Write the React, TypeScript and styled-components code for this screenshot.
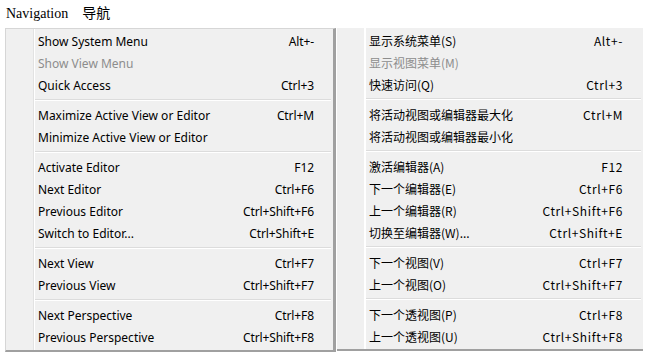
import React from "react";
import styled, { createGlobalStyle } from "styled-components";

const GlobalStyle = createGlobalStyle`
	html, body {
		margin: 0;
		padding: 0;
		background: #ffffff;
	}
`;

type MenuEntry = { label: string; shortcut?: string; disabled?: boolean } | "sep";

const englishItems: MenuEntry[] = [
	{ label: "Show System Menu", shortcut: "Alt+-" },
	{ label: "Show View Menu", disabled: true },
	{ label: "Quick Access", shortcut: "Ctrl+3" },
	"sep",
	{ label: "Maximize Active View or Editor", shortcut: "Ctrl+M" },
	{ label: "Minimize Active View or Editor" },
	"sep",
	{ label: "Activate Editor", shortcut: "F12" },
	{ label: "Next Editor", shortcut: "Ctrl+F6" },
	{ label: "Previous Editor", shortcut: "Ctrl+Shift+F6" },
	{ label: "Switch to Editor...", shortcut: "Ctrl+Shift+E" },
	"sep",
	{ label: "Next View", shortcut: "Ctrl+F7" },
	{ label: "Previous View", shortcut: "Ctrl+Shift+F7" },
	"sep",
	{ label: "Next Perspective", shortcut: "Ctrl+F8" },
	{ label: "Previous Perspective", shortcut: "Ctrl+Shift+F8" },
];

const chineseItems: MenuEntry[] = [
	{ label: "显示系统菜单(S)", shortcut: "Alt+-" },
	{ label: "显示视图菜单(M)", disabled: true },
	{ label: "快速访问(Q)", shortcut: "Ctrl+3" },
	"sep",
	{ label: "将活动视图或编辑器最大化", shortcut: "Ctrl+M" },
	{ label: "将活动视图或编辑器最小化" },
	"sep",
	{ label: "激活编辑器(A)", shortcut: "F12" },
	{ label: "下一个编辑器(E)", shortcut: "Ctrl+F6" },
	{ label: "上一个编辑器(R)", shortcut: "Ctrl+Shift+F6" },
	{ label: "切换至编辑器(W)...", shortcut: "Ctrl+Shift+E" },
	"sep",
	{ label: "下一个视图(V)", shortcut: "Ctrl+F7" },
	{ label: "上一个视图(O)", shortcut: "Ctrl+Shift+F7" },
	"sep",
	{ label: "下一个透视图(P)", shortcut: "Ctrl+F8" },
	{ label: "上一个透视图(U)", shortcut: "Ctrl+Shift+F8" },
];

const Page = styled.div`
	padding: 6px 0 0 0;
	width: 650px;
	height: 356px;
	box-sizing: border-box;
`;

const Title = styled.div`
	display: flex;
	gap: 14px;
	padding-left: 6px;
	height: 22px;
	font-family: "Liberation Serif", "Noto Sans CJK SC", serif;
	font-size: 14px;
	line-height: 16px;
	color: #000;
`;

const Menus = styled.div`
	display: flex;
	align-items: flex-start;
	padding-left: 5px;
`;

const Menu = styled.div<{ $width: number; $cjk?: boolean }>`
	position: relative;
	width: ${(p) => p.$width}px;
	box-sizing: border-box;
	background: #f0f0f0;
	padding: 1px 0 2px 0;
	border-bottom: 2px solid #a0a0a0;
	border-left: ${(p) => (p.$cjk ? "0" : "1px solid #d6d6d6")};
	border-top: ${(p) => (p.$cjk ? "0" : "1px solid #d6d6d6")};
	border-right: ${(p) => (p.$cjk ? "0" : "3px solid #a0a0a0")};
	margin-right: ${(p) => (p.$cjk ? "0" : "1px")};
	font-family: ${(p) => (p.$cjk ? `"Noto Sans CJK SC", "Noto Sans", sans-serif` : `"Noto Sans", "DejaVu Sans", sans-serif`)};
	font-size: 12px;
	color: #000;

	&::before {
		content: "";
		position: absolute;
		top: 0;
		bottom: 0;
		left: 27px;
		width: 1px;
		background: ${(p) => (p.$cjk ? "#ffffff" : "#e2e2e2")};
		border-right: 1px solid #ffffff;
	}
`;

const Item = styled.div<{ $disabled?: boolean; $padRight: number }>`
	position: relative;
	display: flex;
	align-items: center;
	justify-content: space-between;
	height: 22px;
	padding: 0 ${(p) => p.$padRight}px 0 32px;
	color: ${(p) => (p.$disabled ? "#8d8d8d" : "#000")};
	white-space: nowrap;
`;

const Shortcut = styled.span<{ $cjk?: boolean }>`
	letter-spacing: ${(p) => (p.$cjk ? "0.6px" : "-0.1px")};
`;

const Separator = styled.div`
	position: relative;
	height: 8px;
	margin-left: 29px;
	margin-right: 2px;
	display: flex;
	flex-direction: column;
	justify-content: center;

	&::after {
		content: "";
		display: block;
		height: 1px;
		background: #dcdcdc;
		border-bottom: 1px solid #ffffff;
	}
`;

const MenuList = ({ items, width, cjk }: { items: MenuEntry[]; width: number; cjk?: boolean }) => (
	<Menu $width={width} $cjk={cjk}>
		{items.map((item, i) =>
			item === "sep" ? (
				<Separator key={i} />
			) : (
				<Item key={i} $disabled={item.disabled} $padRight={cjk ? 20 : 19}>
					<span>{item.label}</span>
					{item.shortcut && <Shortcut $cjk={cjk}>{item.shortcut}</Shortcut>}
				</Item>
			)
		)}
	</Menu>
);

const App = () => (
	<Page>
		<GlobalStyle />
		<Title>
			<span>Navigation</span>
			<span>导航</span>
		</Title>
		<Menus>
			<MenuList items={englishItems} width={331} />
			<MenuList items={chineseItems} width={306} cjk />
		</Menus>
	</Page>
);

export default App;
